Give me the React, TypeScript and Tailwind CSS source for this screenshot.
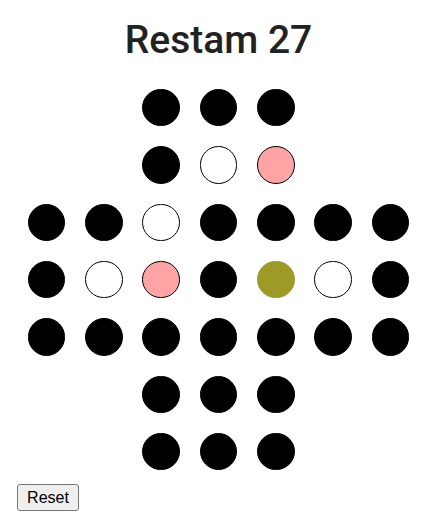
import React from "react";

type C = "B" | "W" | "P" | "O" | null;

const rows: C[][] = [
  [null, null, "B", "B", "B", null, null],
  [null, null, "B", "W", "P", null, null],
  ["B", "B", "W", "B", "B", "B", "B"],
  ["B", "W", "P", "B", "O", "W", "B"],
  ["B", "B", "B", "B", "B", "B", "B"],
  [null, null, "B", "B", "B", null, null],
  [null, null, "B", "B", "B", null, null],
];

function Hole({ c }: { c: C }) {
  if (!c) return <div className="w-[57.33px] h-[57.33px]" />;
  const cls =
    c === "B"
      ? "bg-black border-black"
      : c === "W"
      ? "bg-white border-black"
      : c === "P"
      ? "bg-[#ffa4a4] border-black"
      : "bg-[#9d9b27] border-[#9d9b27]";
  return (
    <div className="w-[57.33px] h-[57.33px] flex items-center justify-center">
      <div className={`w-[37.5px] h-[37.5px] rounded-full border ${cls}`} />
    </div>
  );
}

export default function App() {
  return (
    <div className="flex flex-col bg-white w-[437px] h-[529px]">
      <h1
        className="pt-[17px] text-center text-[39px] leading-[46px] font-medium text-[#222]"
        style={{ fontFamily: "Roboto, sans-serif" }}
      >
        Restam 27
      </h1>
      <div className="mt-[16px] flex flex-col items-center">
        {rows.map((r, i) => (
          <div key={i} className="flex">
            {r.map((c, j) => (
              <Hole key={j} c={c} />
            ))}
          </div>
        ))}
      </div>
      <div className="mt-[4px] ml-[17px]">
        <button
          className="w-[62px] h-[27px] bg-[#efefef] border border-[#767676] rounded-[3px] text-[16px] text-black"
          style={{ fontFamily: "'Liberation Sans', Arial, sans-serif" }}
        >
          Reset
        </button>
      </div>
    </div>
  );
}
